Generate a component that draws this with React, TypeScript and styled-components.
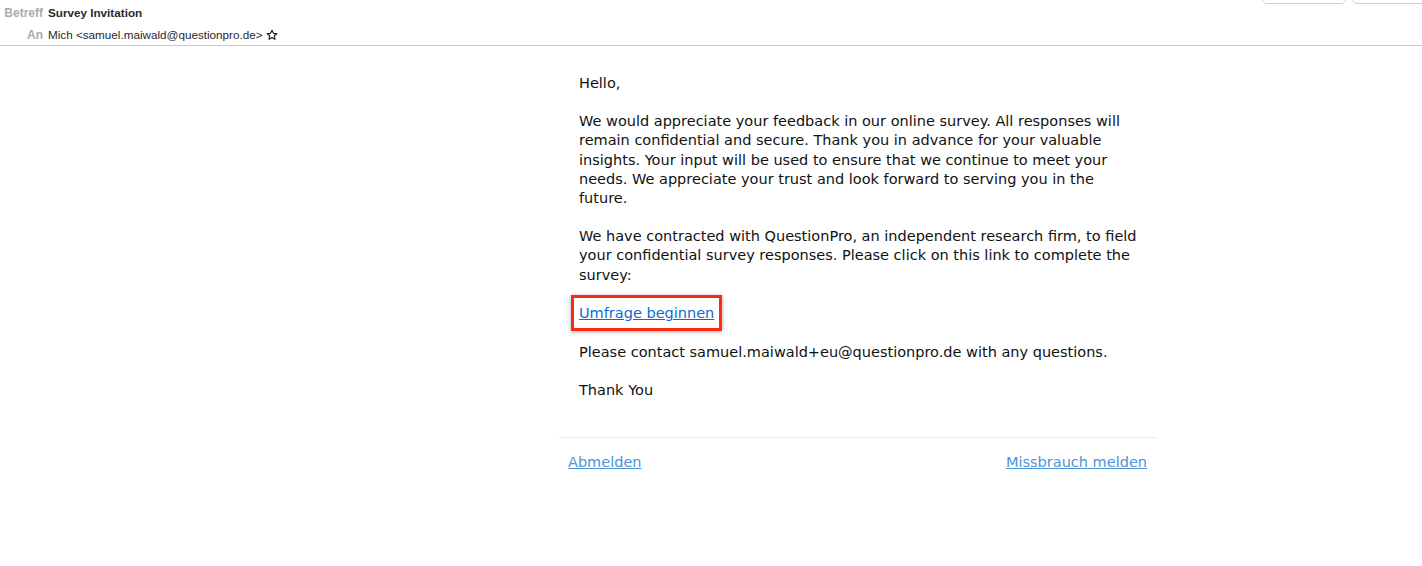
import React from "react";
import styled, { createGlobalStyle } from "styled-components";

const GlobalStyle = createGlobalStyle`
  html, body {
    margin: 0;
    padding: 0;
    background: #ffffff;
  }
`;

// The whole mail view
const Page = styled.div`
  width: 1422px;
  height: 566px;
  overflow: hidden;
  background: #fff;
`;

// Mail header with subject and recipient
const Header = styled.div`
  display: flex;
  justify-content: space-between;
  height: 45px;
  border-bottom: 1px solid #c8c8c8;
  font-family: "Liberation Sans", Arial, sans-serif;
  font-size: 11.7px;
`;

const HeaderFields = styled.div`
  display: flex;
  flex-direction: column;
  padding-top: 6px;
  gap: 8px;
`;

const FieldRow = styled.div`
  display: grid;
  grid-template-columns: 43px auto;
  column-gap: 5px;
  align-items: center;
  line-height: 14px;
`;

const FieldLabel = styled.span`
  text-align: right;
  color: #ababab;
  font-weight: 700;
  font-size: 12px;
`;

const FieldValue = styled.span<{ $bold?: boolean }>`
  display: flex;
  align-items: center;
  gap: 3px;
  color: #2a2a2a;
  font-weight: ${(p) => (p.$bold ? 700 : 400)};
`;

const ToolButtons = styled.div`
  display: flex;
  gap: 6px;
  margin-top: -24px;
  margin-right: -18px;
`;

const ToolButton = styled.div`
  width: 82px;
  height: 26px;
  border: 1px solid #cfcfcf;
  border-radius: 5px;
  background: #fff;
  &:last-child {
    width: 86px;
  }
`;

// Body of the mail
const MailBody = styled.div`
  display: flex;
  padding-top: 28px;
  padding-left: 559px;
`;

const Content = styled.div`
  width: 598px;
  font-family: "DejaVu Sans", Verdana, sans-serif;
  font-size: 14.5px;
  line-height: 19.2px;
  color: #111;
`;

const Message = styled.div`
  padding: 0 20px 18px 20px;
`;

const Paragraph = styled.p`
  margin: 0 0 19px 0;
`;

const HighlightBox = styled.div`
  display: inline-block;
  margin: -10px 0 12px -8px;
  padding: 6px 5px 5px 5px;
  border: 3px solid #fb2a12;
  box-shadow: 0 1px 4px rgba(0, 0, 0, 0.35);
`;

const SurveyLink = styled.a`
  color: #0a6cd6;
  text-decoration: underline;
`;

const Footer = styled.div`
  display: flex;
  justify-content: space-between;
  border-top: 1px solid #ececec;
  padding: 15px 10px 0 9px;
`;

const FooterLink = styled.a`
  color: #4d93da;
  text-decoration: underline;
  font-size: 14.5px;
`;

const StarIcon = () => (
  <svg width="12" height="12" viewBox="0 0 24 24" fill="none" stroke="#222" strokeWidth="2.4" strokeLinejoin="round">
    <path d="M12 2.5l2.9 6.2 6.7.7-5 4.6 1.4 6.6L12 17.3l-6 3.3 1.4-6.6-5-4.6 6.7-.7z" />
  </svg>
);

const App: React.FC = () => {
  return (
    <Page>
      <GlobalStyle />
      <Header>
        <HeaderFields>
          <FieldRow>
            <FieldLabel>Betreff</FieldLabel>
            <FieldValue $bold>Survey Invitation</FieldValue>
          </FieldRow>
          <FieldRow>
            <FieldLabel>An</FieldLabel>
            <FieldValue>
              Mich &lt;samuel.maiwald@questionpro.de&gt;
              <StarIcon />
            </FieldValue>
          </FieldRow>
        </HeaderFields>
        <ToolButtons>
          <ToolButton />
          <ToolButton />
        </ToolButtons>
      </Header>
      <MailBody>
        <Content>
          <Message>
            <Paragraph>Hello,</Paragraph>
            <Paragraph>
              We would appreciate your feedback in our online survey. All responses will
              <br />
              remain confidential and secure. Thank you in advance for your valuable
              <br />
              insights. Your input will be used to ensure that we continue to meet your
              <br />
              needs. We appreciate your trust and look forward to serving you in the
              <br />
              future.
            </Paragraph>
            <Paragraph>
              We have contracted with QuestionPro, an independent research firm, to field
              <br />
              your confidential survey responses. Please click on this link to complete the
              <br />
              survey:
            </Paragraph>
            <HighlightBox>
              <SurveyLink href="#">Umfrage beginnen</SurveyLink>
            </HighlightBox>
            <Paragraph>Please contact samuel.maiwald+eu@questionpro.de with any questions.</Paragraph>
            <Paragraph>Thank You</Paragraph>
          </Message>
          <Footer>
            <FooterLink href="#">Abmelden</FooterLink>
            <FooterLink href="#">Missbrauch melden</FooterLink>
          </Footer>
        </Content>
      </MailBody>
    </Page>
  );
};

export default App;
